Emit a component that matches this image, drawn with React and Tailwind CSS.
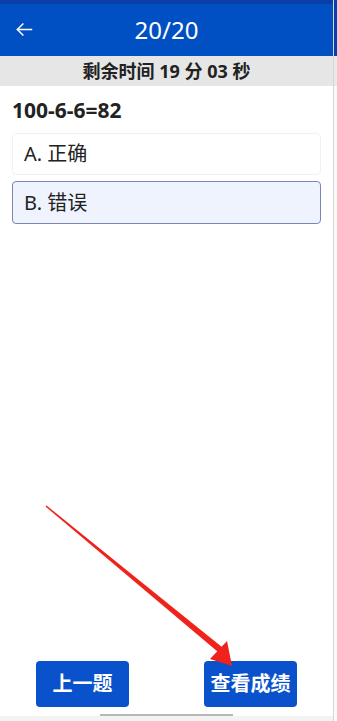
import React from "react";

function BackArrow() {
  return (
    <svg width="19" height="19" viewBox="0 0 24 24" fill="none" stroke="white" strokeWidth="2" strokeLinecap="round" strokeLinejoin="round">
      <path d="M21 12H3" />
      <path d="M10 5l-7 7 7 7" />
    </svg>
  );
}

export default function App() {
  return (
    <div
      className="relative flex h-[721px] w-[337px] overflow-hidden bg-white"
      style={{ fontFamily: '"Noto Sans", "Noto Sans CJK SC", sans-serif' }}
    >
      {/* main phone panel */}
      <div className="flex w-[333px] flex-col">
        <div className="h-[4px] bg-[#0a3ea8]" />
        <header className="relative flex h-[52px] items-center justify-center bg-[#0050c4]">
          <div className="absolute left-[15px] top-[16px]">
            <BackArrow />
          </div>
          <span className="text-[24px] leading-none text-white">20/20</span>
        </header>
        <div className="flex h-[30px] items-center justify-center bg-[#e6e6e6] text-[18px] font-bold text-[#222]">
          剩余时间 19 分 03 秒
        </div>

        <div className="px-[12px]">
          <div className="pt-[10px] text-[21px] font-bold leading-[28px] text-[#222]">100-6-6=82</div>
          <div className="mt-[9px] flex h-[42px] items-center rounded-[4px] border border-[#f1f1f1] px-[11px] text-[20px] text-[#222]">
            A.&nbsp;正确
          </div>
          <div className="mt-[6px] flex h-[43px] items-center rounded-[4px] border border-[#7b86b8] bg-[#eef3fd] px-[11px] text-[20px] text-[#222]">
            B.&nbsp;错误
          </div>
        </div>

        <div className="flex-1" />

        <div className="flex justify-between px-[36px]">
          <button className="h-[46px] w-[93px] rounded-[4px] bg-[#0a52cc] text-[20px] font-bold text-white">上一题</button>
          <button className="h-[46px] w-[93px] rounded-[4px] bg-[#0a52cc] text-[20px] font-bold text-white">查看成绩</button>
        </div>
        <div className="mt-[7px] flex justify-center">
          <div className="h-[2px] w-[133px] bg-[#b8b8b8]" />
        </div>
        <div className="h-[5px] bg-[#f3f3f3]" />
      </div>

      {/* edge of the neighbouring window */}
      <div className="flex w-[4px] flex-col border-l border-[#d6d6d6] bg-[#fafafa]">
        <div className="h-[56px] bg-[#0a3ea8]" />
        <div className="h-[30px] bg-[#e8e8e8]" />
      </div>

      {/* red annotation arrow */}
      <svg className="pointer-events-none absolute left-0 top-0" width="337" height="721" viewBox="0 0 337 721">
        <polygon points="45.5,506.5 46.5,505.5 225,649.5 221,654.5" fill="#f0221c" />
        <polygon points="232,666 210,659 227,641" fill="#f0221c" />
      </svg>
    </div>
  );
}
